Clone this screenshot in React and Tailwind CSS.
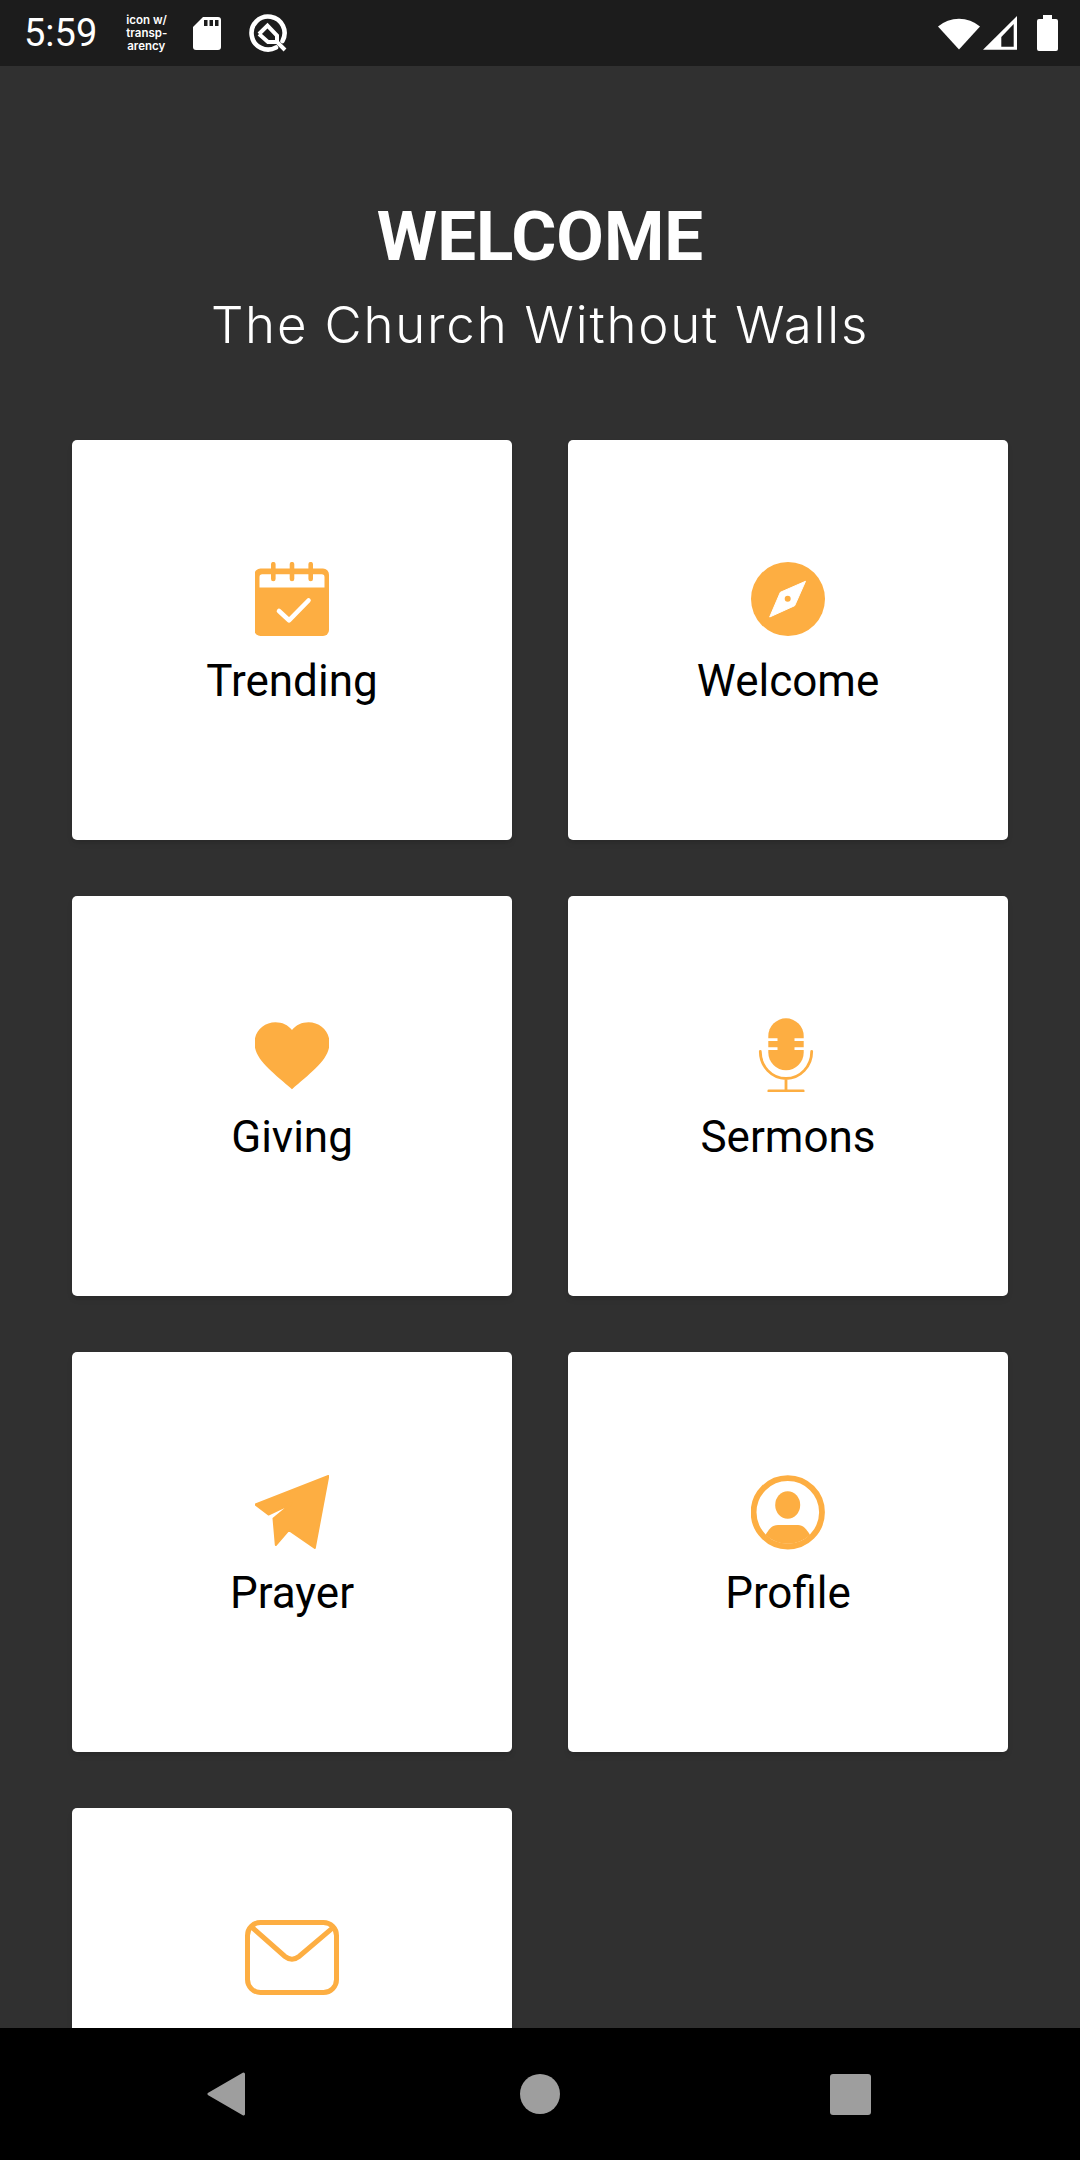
import React from 'react';

const orange = '#fdae42';

const CalendarIcon = () => (
  <svg viewBox="0 0 74 74" className="w-[74px] h-[74px]">
    <rect x="-0.5" y="6.5" width="74.5" height="67.5" rx="6" fill={orange} />
    <path d="M4.5 25.5V15a2.7 2.7 0 0 1 2.7-2.7h59.6a2.7 2.7 0 0 1 2.7 2.7v10.5z" fill="#fff" />
    <path d="M18.3 2.2v14.8M37 2.2v14.8M55.7 2.2v14.8" stroke={orange} strokeWidth="4.6" strokeLinecap="round" fill="none" />
    <path d="M24 49l10 9.3L53.5 38.5" stroke="#fff" strokeWidth="4.6" strokeLinecap="round" strokeLinejoin="round" fill="none" />
  </svg>
);

const CompassIcon = () => (
  <svg viewBox="0 0 74 74" className="w-[74px] h-[74px]">
    <circle cx="37" cy="37" r="37" fill={orange} />
    <path d="M54.5 19.3L43.7 43.7 18.7 55l10.6-24.7z" fill="#fff" stroke="#fff" strokeWidth="1" strokeLinejoin="round" />
    <circle cx="36.7" cy="36.7" r="3" fill={orange} />
  </svg>
);

const HeartIcon = () => (
  <svg viewBox="0 0 74 74" className="w-[74px] h-[74px]">
    <path d="M37 12C41 7 47 4.3 53.5 4.3 65 4.3 74.5 13 74.5 25 74.5 42 55 55 37 71.3 19 55-.5 42-.5 25-.5 13 9 4.3 20.5 4.3 27 4.3 33 7 37 12z" fill={orange} />
  </svg>
);

const MicIcon = () => (
  <svg viewBox="0 0 74 74" className="w-[74px] h-[74px]">
    <rect x="17.3" y="0.3" width="35.4" height="52" rx="17.7" fill={orange} />
    <path d="M17 21.7h9.5M43.5 21.7H53M17 30.7h9.5M43.5 30.7H53" stroke="#fff" strokeWidth="2.8" fill="none" />
    <path d="M9.3 33.5a25.7 27 0 0 0 51.4 0M35 60.5V73M17.8 73h34.4" stroke={orange} strokeWidth="2.8" strokeLinecap="round" fill="none" />
  </svg>
);

const PlaneIcon = () => (
  <svg viewBox="0 0 74 76" className="w-[74px] h-[76px]">
    <path d="M73.3 2L59.8 74 33.7 56 20.8 71 18.5 44.5 36.7 29.5 13.5 40.5 0.5 30.5z" fill={orange} stroke={orange} strokeWidth="2" strokeLinejoin="round" />
  </svg>
);

const ProfileIcon = () => (
  <svg viewBox="0 0 74 76" className="w-[74px] h-[76px]">
    <circle cx="36.8" cy="38.3" r="34.2" fill="none" stroke={orange} strokeWidth="5.8" />
    <ellipse cx="36.7" cy="31" rx="12.5" ry="13.7" fill={orange} />
    <path d="M14.5 61C18 55 21 51 27 51H47C52 51 55.5 55 59 61A33 33 0 0 1 14.5 61z" fill={orange} />
  </svg>
);

const MailIcon = () => (
  <svg viewBox="0 0 94 75" className="w-[94px] h-[75px] -mt-[10px]">
    <rect x="2.5" y="2.5" width="89" height="70" rx="13" fill="none" stroke={orange} strokeWidth="5" />
    <path d="M7.3 7.7L40 36.5Q47 42 54 36.5L88 7.7" fill="none" stroke={orange} strokeWidth="5" strokeLinecap="round" />
  </svg>
);

const cards = [
  { label: 'Trending', icon: <CalendarIcon /> },
  { label: 'Welcome', icon: <CompassIcon /> },
  { label: 'Giving', icon: <HeartIcon /> },
  { label: 'Sermons', icon: <MicIcon /> },
  { label: 'Prayer', icon: <PlaneIcon /> },
  { label: 'Profile', icon: <ProfileIcon /> },
  { icon: <MailIcon /> },
];

const StatusBar = () => (
  <div className="h-[66px] shrink-0 bg-[#1c1c1c] flex items-center text-white">
    <span className="ml-[24px] text-[38px] leading-none font-['Roboto',sans-serif]">5:59</span>
    <div className="ml-[29px] w-[40px] text-center text-[11.5px] leading-[13px] font-semibold font-['Inter',sans-serif] whitespace-nowrap">
      icon w/<br />transp-<br />arency
    </div>
    <svg viewBox="0 0 28 33" className="ml-[27px] w-[28px] h-[33px]">
      <path d="M10 0H25a3 3 0 0 1 3 3V30a3 3 0 0 1-3 3H3a3 3 0 0 1-3-3V10z" fill="#fff" />
      <path d="M11 3h3.5v6H11zM16.5 3H20v6h-3.5zM22 3h3.5v6H22z" fill="#1c1c1c" />
    </svg>
    <svg viewBox="0 0 38 38" className="ml-[28px] w-[38px] h-[38px]">
      <path d="M27 33.5A16.5 16.5 0 1 1 33.5 27" fill="none" stroke="#fff" strokeWidth="4.6" strokeLinecap="round" />
      <path d="M10 20L18.5 11.5 28 21.5V28L36 36" fill="none" stroke="#fff" strokeWidth="4" />
      <path d="M10 20L19 28H28" fill="none" stroke="#fff" strokeWidth="4" />
    </svg>
    <div className="ml-auto flex items-center">
      <svg viewBox="0 0 42 34" className="w-[42px] h-[34px]">
        <path d="M21 33.5L0 10.5A32 32 0 0 1 42 10.5z" fill="#fff" />
      </svg>
      <svg viewBox="0 0 34 34" className="ml-[3px] w-[34px] h-[34px]">
        <path d="M0 33.7H34V0z" fill="#fff" />
        <path d="M18.3 30.7V21L30.7 8V30.7z" fill="#1c1c1c" />
      </svg>
      <svg viewBox="0 0 21 36" className="ml-[20px] mr-[22px] w-[21px] h-[36px]">
        <path d="M6 0H15V4H19a2 2 0 0 1 2 2V34a2 2 0 0 1-2 2H2a2 2 0 0 1-2-2V6a2 2 0 0 1 2-2H6z" fill="#fff" />
      </svg>
    </div>
  </div>
);

const NavBar = () => (
  <div className="h-[132px] shrink-0 bg-black flex items-center justify-between pl-[207px] pr-[209px]">
    <svg viewBox="0 0 38 44" className="w-[38px] h-[44px]">
      <path d="M36.5 2L2 22 36.5 42z" fill="#9e9e9e" stroke="#9e9e9e" strokeWidth="3" strokeLinejoin="round" />
    </svg>
    <div className="ml-[5px] w-[40px] h-[40px] rounded-full bg-[#9e9e9e]" />
    <div className="w-[41px] h-[41px] rounded-[3px] bg-[#9e9e9e]" />
  </div>
);

export default function App() {
  return (
    <div className="w-[1080px] h-[2160px] flex flex-col overflow-hidden bg-[#303030]">
      <StatusBar />
      <div className="flex-1 overflow-hidden">
        <div className="pt-[133px] flex flex-col items-center text-white">
          <h1 className="text-[69px] leading-[76px] font-bold font-['Roboto',sans-serif]">WELCOME</h1>
          <p className="mt-[20px] text-[51px] leading-[60px] font-light tracking-[1.8px] font-['Inter',sans-serif] whitespace-nowrap">The Church Without Walls</p>
        </div>
        <div className="mt-[85px] px-[72px] grid grid-cols-2 gap-[56px]">
          {cards.map((card, i) => (
            <div key={i} className="h-[400px] bg-white rounded-[5px] shadow-md flex flex-col items-center pt-[122px]">
              <div className="h-[74px] flex items-start justify-center">{card.icon}</div>
              {card.label && (
                <div className="mt-[19px] text-[44px] leading-[52px] text-black font-['Roboto',sans-serif]">{card.label}</div>
              )}
            </div>
          ))}
        </div>
      </div>
      <NavBar />
    </div>
  );
}
